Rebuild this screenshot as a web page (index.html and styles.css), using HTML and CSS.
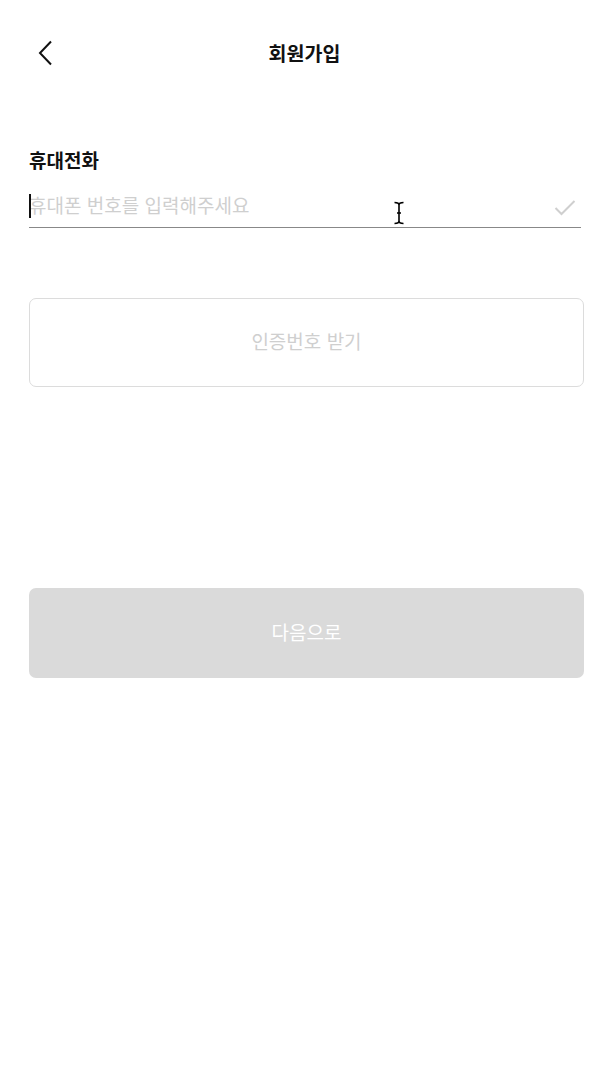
FILE: index.html
```html
<!DOCTYPE html>
<html lang="ko">
<head>
<meta charset="utf-8" />
<title>회원가입</title>
<link rel="stylesheet" href="styles.css">
</head>
<body>
	<div class="header">
		<a class="back" href="#">
			<svg width="16" height="26" viewBox="0 0 16 26"><polyline points="13,1.5 2,13 13,24.5" fill="none" stroke="#111" stroke-width="2" /></svg>
		</a>
		<h1 class="title">회원가입</h1>
		<span></span>
	</div>
	<div class="content">
		<p class="label">휴대전화</p>
		<div class="field">
			<span class="caret"></span>
			<input class="phone" type="tel" placeholder="휴대폰 번호를 입력해주세요" />
			<svg class="check" width="22" height="16" viewBox="0 0 22 16"><polyline points="1.5,8 7.5,14 20.5,1" fill="none" stroke="#cfcfcf" stroke-width="2" /></svg>
			<svg class="ibeam" width="12" height="24" viewBox="0 0 12 24"><path d="M1.5 1.5 Q6 1.5 6 4 Q6 1.5 10.5 1.5 M6 4 V20 Q6 22.5 1.5 22.5 M6 20 Q6 22.5 10.5 22.5 M4 12 H8" fill="none" stroke="#000" stroke-width="1.6" /></svg>
		</div>
		<button class="btn-code" type="button">인증번호 받기</button>
		<button class="btn-next" type="button">다음으로</button>
	</div>
</body>
</html>
```

FILE: styles.css
```css
*{margin:0;padding:0;box-sizing:border-box;}
body{background:#fff;font-family:"Noto Sans CJK KR","Noto Sans",sans-serif;color:#111;}
.header{height:106px;display:grid;grid-template-columns:1fr auto 1fr;align-items:center;}
.back{display:block;width:16px;height:26px;margin-left:38px;}
.back svg{display:block;}
.title{font-size:19.5px;font-weight:700;line-height:24px;margin-left:9px;}
.content{padding:0 16px 0 29px;}
.label{margin-top:42px;font-size:19px;font-weight:700;line-height:24px;}
.field{position:relative;margin-top:22px;margin-right:3px;height:34px;padding-bottom:9px;border-bottom:1px solid #888;display:flex;align-items:center;}
.caret{width:2px;height:24px;background:#111;flex:none;margin-right:-2px;position:relative;z-index:1;}
.phone{flex:1;border:0;outline:0;background:none;font-family:inherit;font-size:19px;line-height:24px;height:24px;margin-top:-3px;color:#111;}
.phone::placeholder{color:#cfcfcf;}
.check{flex:none;margin:4px 5px 0 0;}
.ibeam{position:absolute;left:364px;top:7px;}
.btn-code,.btn-next{display:block;width:100%;font-family:inherit;font-size:19px;border-radius:7px;padding-bottom:4px;cursor:pointer;}
.btn-code{margin-top:70px;height:89px;background:#fff;border:1.5px solid #dcdcdc;color:#cfcfcf;}
.btn-next{margin-top:201px;height:90px;background:#dadada;border:0;color:#fff;}
```
